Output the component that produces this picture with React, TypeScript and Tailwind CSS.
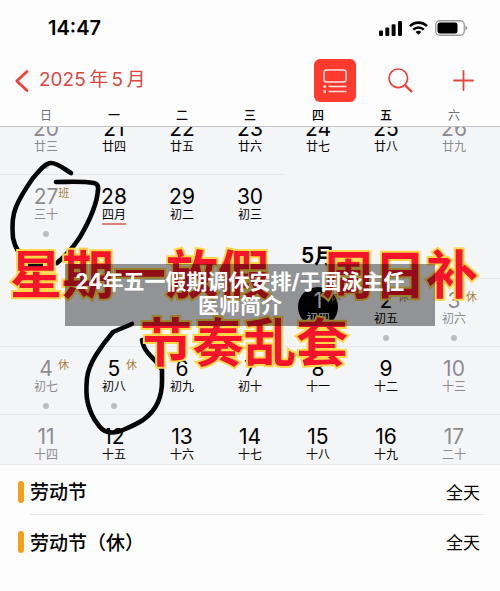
import { clsx } from 'clsx'

type Day = {
  day: number
  lunar: string
  tag?: '休' | '班'
  dot?: boolean
  today?: boolean
  monthStart?: boolean
}

const weekdays = ['日', '一', '二', '三', '四', '五', '六']

const aprilWeeks: (Day | null)[][] = [
  [
    { day: 20, lunar: '廿三', dot: true },
    { day: 21, lunar: '廿四' },
    { day: 22, lunar: '廿五' },
    { day: 23, lunar: '廿六' },
    { day: 24, lunar: '廿七' },
    { day: 25, lunar: '廿八' },
    { day: 26, lunar: '廿九' },
  ],
  [
    { day: 27, lunar: '三十', tag: '班', dot: true },
    { day: 28, lunar: '四月', monthStart: true },
    { day: 29, lunar: '初二' },
    { day: 30, lunar: '初三' },
    null,
    null,
    null,
  ],
]

const mayWeeks: (Day | null)[][] = [
  [
    null,
    null,
    null,
    null,
    { day: 1, lunar: '初四', tag: '休', today: true },
    { day: 2, lunar: '初五', tag: '休', dot: true },
    { day: 3, lunar: '初六', tag: '休', dot: true },
  ],
  [
    { day: 4, lunar: '初七', tag: '休', dot: true },
    { day: 5, lunar: '初八', tag: '休', dot: true },
    { day: 6, lunar: '初九' },
    { day: 7, lunar: '初十' },
    { day: 8, lunar: '十一' },
    { day: 9, lunar: '十二' },
    { day: 10, lunar: '十三' },
  ],
  [
    { day: 11, lunar: '十四' },
    { day: 12, lunar: '十五' },
    { day: 13, lunar: '十六' },
    { day: 14, lunar: '十七' },
    { day: 15, lunar: '十八' },
    { day: 16, lunar: '十九' },
    { day: 17, lunar: '二十' },
  ],
]

const events = [
  { title: '劳动节', time: '全天' },
  { title: '劳动节（休）', time: '全天' },
]

function StatusBar() {
  return (
    <div className="flex items-center justify-between pt-3 pr-8 pl-12">
      <span className="text-xl leading-8 font-semibold">14:47</span>
      <div className="flex items-center gap-[7px]">
        <svg width="23" height="15" viewBox="0 0 23 15" aria-hidden="true">
          <rect x="0" y="9.5" width="4" height="5.5" rx="1.2" />
          <rect x="6.3" y="6.5" width="4" height="8.5" rx="1.2" />
          <rect x="12.6" y="3.3" width="4" height="11.7" rx="1.2" />
          <rect x="19" y="0" width="4" height="15" rx="1.2" />
        </svg>
        <svg width="19" height="14" viewBox="0 0 19 14" fill="none" stroke="#000" strokeWidth="2.6" aria-hidden="true">
          <path d="M1 5.2C5.7 .4 13.3 .4 18 5.2" />
          <path d="M4.2 8.6C7.2 5.7 11.8 5.7 14.8 8.6" />
          <path d="M9.5 13.8 6.6 10.9C8.3 9.5 10.7 9.5 12.4 10.9Z" fill="#000" stroke="none" />
        </svg>
        <svg width="33" height="16" viewBox="0 0 33 16" aria-hidden="true">
          <rect x=".75" y=".75" width="28.5" height="14.5" rx="4" fill="none" stroke="#999" strokeWidth="1.3" />
          <rect x="2.5" y="2.5" width="20" height="11" rx="2.5" />
          <path d="M30.5 5.5c2 .8 2 4.2 0 5z" fill="#888" />
        </svg>
      </div>
    </div>
  )
}

function Header() {
  return (
    <header className="flex items-center justify-between pt-[15px] pr-6.5 pl-3.5">
      <button className="flex items-center gap-2.5 text-[#d9473f]">
        <svg width="15" height="24" viewBox="0 0 15 24" fill="none" stroke="#ee4138" strokeWidth="2.8" strokeLinecap="round" strokeLinejoin="round" aria-hidden="true">
          <path d="M13 2.5 2.8 12 13 21.5" />
        </svg>
        <span className="text-[19px]">2025&thinsp;年&thinsp;5&thinsp;月</span>
      </button>
      <div className="flex items-center text-[#e5443c]">
        <button aria-label="列表" className="mr-8 grid h-[43px] w-10.5 place-items-center rounded-md bg-[#ff3b30]">
          <svg width="24" height="24" viewBox="0 0 24 24" fill="none" stroke="#ffe3e0" strokeWidth="1.5" aria-hidden="true">
            <rect x="1" y="1" width="22" height="12" rx="2.5" />
            <path d="M5.5 17.5H23.5M5.5 22.5H23.5" />
            <path d="M.5 17.5H3M.5 22.5H3" strokeWidth="2.5" />
          </svg>
        </button>
        <button aria-label="搜索" className="mr-10">
          <svg width="25" height="25" viewBox="0 0 25 25" fill="none" stroke="currentColor" strokeLinecap="round" aria-hidden="true">
            <circle cx="10.3" cy="10.3" r="9.3" strokeWidth="1.7" />
            <path d="M17.3 17.3 23.3 23.3" strokeWidth="2.4" />
          </svg>
        </button>
        <button aria-label="添加">
          <svg width="21" height="21" viewBox="0 0 21 21" fill="none" stroke="currentColor" strokeWidth="1.8" strokeLinecap="round" aria-hidden="true">
            <path d="M10.5 1V20M1 10.5H20" />
          </svg>
        </button>
      </div>
    </header>
  )
}

function DayCell({ item }: { item: Day }) {
  return (
    <>
      <div className={clsx('relative flex flex-col items-center', item.today && 'text-white')}>
        {item.today && <span className="absolute -top-1 size-10 rounded-full bg-black" />}
        <span className="relative text-[21px] leading-5">{item.day}</span>
        <span
          className={clsx('relative text-xs leading-4', item.monthStart && 'border-b-2 border-[#dd7f7a]')}
        >
          {item.lunar}
        </span>
        {item.tag && (
          <span className="absolute -top-0.5 left-full text-[11px] leading-4 text-[#a88039]">{item.tag}</span>
        )}
      </div>
      {item.dot && <span className="mt-2 size-1.5 rounded-full bg-[#bcbcbf]" />}
    </>
  )
}

function Weeks({ weeks }: { weeks: (Day | null)[][] }) {
  return weeks.map((week, i) => (
    <div key={i} className="grid grid-cols-7 px-3">
      {week.map((item, j) =>
        item ? (
          <div
            key={j}
            className={clsx(
              'flex h-17 flex-col items-center border-t border-gray-200 pt-3',
              j === 0 && '-ml-3 pl-3 text-[#8c8c90]',
              j === 6 && '-mr-3 pr-3 text-[#8c8c90]',
            )}
          >
            <DayCell item={item} />
          </div>
        ) : (
          <div key={j} />
        ),
      )}
    </div>
  ))
}

function Scribbles() {
  return (
    <svg
      className="absolute top-0 left-0"
      width="180"
      height="464"
      viewBox="0 0 180 464"
      fill="none"
      stroke="#050505"
      strokeWidth="4.6"
      strokeLinecap="round"
      strokeLinejoin="round"
      aria-hidden="true"
    >
      <path d="M71 173C64 169 58 163 51 163C45 163 40 170 33 178C26 188 20 197 16 207C12 216 12 227 13 238C14 243 15 246 18 251" />
      <path d="M56 182C70 182 82 181 94 183Q99 184 98 190C97 203 90 220 80 237C75 245 65 256 57 263" />
      <path d="M132 324L113 332C107 339 101 347 96 355C91 363 88 370 87 378C86 388 86 396 88 404C90 411 93 418 97 423C100 428 103 431 108 432C113 433 119 432 123 430C130 427 137 424 143 420C150 415 155 409 158 402C161 395 162 389 162 382V370C159 363 153 359 148 353Q143 347 142 340" />
    </svg>
  )
}

export default function App() {
  return (
    <main className="relative min-h-screen overflow-hidden bg-[#fdfdfe] font-['Inter','Noto_Sans_CJK_SC',sans-serif] text-black">
      <StatusBar />
      <Header />

      <div className="grid grid-cols-7 border-b border-[#c4c4c6] px-3 pt-1.5 text-center text-xs leading-4 font-medium">
        {weekdays.map((name, i) => (
          <span key={name} className={clsx('pb-0.5', (i === 0 || i === 6) && 'font-normal text-gray-500')}>
            {name}
          </span>
        ))}
      </div>

      {/* Calendar, scrolled part of the way into April */}
      <section className="overflow-hidden border-b border-gray-200 bg-[#f4f5f7]">
        <div className="-mt-[21px] -mb-[18px]">
          <Weeks weeks={aprilWeeks} />
          <div className="grid h-9 grid-cols-7 px-3">
            <h2 className="col-start-5 text-center text-[21px] leading-7 font-semibold">5月</h2>
          </div>
          <Weeks weeks={mayWeeks} />
        </div>
      </section>

      <ul className="pr-4 pl-4.5">
        {events.map((event, i) => (
          <li key={event.title} className="flex items-center gap-1.5">
            <span className="mt-1 h-5.5 w-1.5 rounded-full bg-[#f59f18]" />
            <div
              className={clsx(
                'flex h-[50px] flex-1 items-center justify-between border-gray-200 pt-2 pr-1',
                i === 0 && 'border-b',
              )}
            >
              <span className="text-[19px] font-medium">{event.title}</span>
              <span className="text-[17px]">{event.time}</span>
            </div>
          </li>
        ))}
      </ul>

      <Scribbles />

      {/* Caption lettering over the calendar */}
      <p className="absolute inset-x-0 top-[242px] pr-3 text-center text-[52px] leading-[68px] font-bold whitespace-pre text-[#f5142b] [-webkit-text-stroke:4px_#ffd84a] [paint-order:stroke_fill]">
        {'星期一放假　周日补\n节奏乱套'}
      </p>
      <svg className="absolute top-[263px] left-7" width="15" height="4" aria-hidden="true">
        <path d="M0 2H15" stroke="#111" strokeWidth="2.5" />
      </svg>

      <h1 className="absolute inset-x-[13%] top-[264px] bg-black/40 pt-1.5 pr-5 pb-2 text-center text-[21px] leading-6 font-bold text-white">
        24年五一假期调休安排/于国泳主任
        <br />
        医师简介
      </h1>
    </main>
  )
}
